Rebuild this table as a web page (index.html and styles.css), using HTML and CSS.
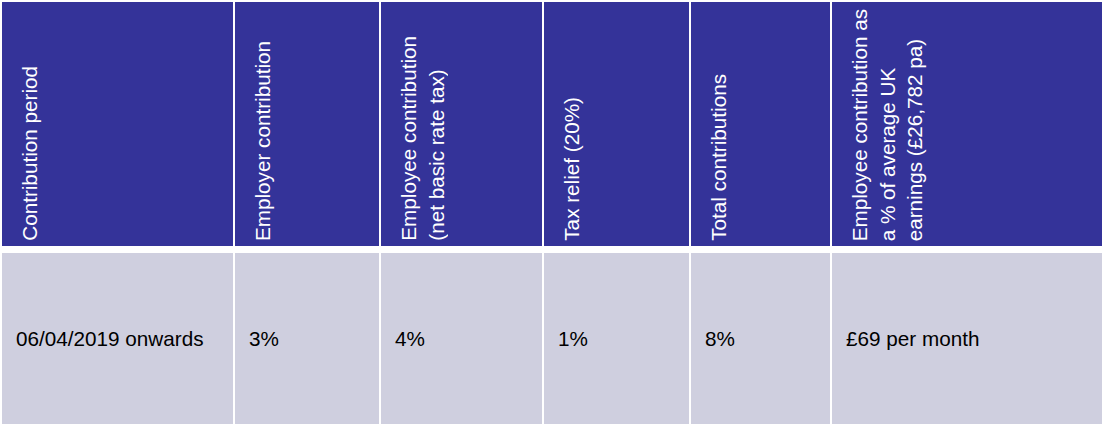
FILE: index.html
```html
<!DOCTYPE html>
<html lang="en">
<head>
<meta charset="utf-8">
<title>Contributions</title>
<link rel="stylesheet" href="styles.css">
</head>
<body>
<div class="table">
  <div class="th"><span>Contribution period</span></div>
  <div class="th"><span>Employer contribution</span></div>
  <div class="th"><span>Employee contribution<br>(net basic rate tax)</span></div>
  <div class="th"><span>Tax relief (20%)</span></div>
  <div class="th"><span>Total contributions</span></div>
  <div class="th"><span>Employee contribution as<br>a % of average UK<br>earnings (£26,782 pa)</span></div>

  <div class="td">06/04/2019 onwards</div>
  <div class="td">3%</div>
  <div class="td">4%</div>
  <div class="td">1%</div>
  <div class="td">8%</div>
  <div class="td">£69 per month</div>
</div>
</body>
</html>
```

FILE: styles.css
```css
html, body {
  margin: 0;
  padding: 0;
  background: #ffffff;
}

body {
  font-family: "Liberation Sans", Arial, sans-serif;
  font-size: 20.7px;
}

.table {
  display: grid;
  grid-template-columns: 231px 144px 161px 145px 139px 270px;
  grid-template-rows: 244px 171px;
  column-gap: 2px;
  row-gap: 7px;
  padding: 2px;
  width: 1100px;
}

.th {
  background: #343399;
  color: #ffffff;
  display: flex;
  align-items: flex-end;
  padding: 0 0 5px 14px;
  overflow: hidden;
}

.th span {
  writing-mode: vertical-rl;
  transform: rotate(180deg);
  line-height: 27.5px;
  white-space: nowrap;
}

.td {
  background: #cfcfdf;
  color: #000000;
  display: flex;
  align-items: center;
  padding: 1px 0 0 14px;
  line-height: 24px;
}
```
